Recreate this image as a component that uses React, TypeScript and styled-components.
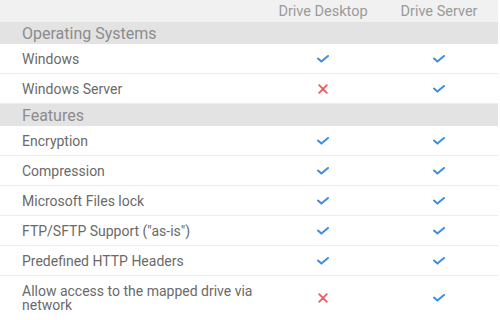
import React from "react";
import styled, { createGlobalStyle } from "styled-components";

const GlobalStyle = createGlobalStyle`
  body {
    margin: 0;
    background: #ffffff;
    font-family: Roboto, "Liberation Sans", sans-serif;
  }
`;

type Support = "yes" | "no";

type TFeature = {
  label: string;
  desktop: Support;
  server: Support;
};

type TSection = {
  title: string;
  rows: TFeature[];
};

const SECTIONS: TSection[] = [
  {
    title: "Operating Systems",
    rows: [
      { label: "Windows", desktop: "yes", server: "yes" },
      { label: "Windows Server", desktop: "no", server: "yes" },
    ],
  },
  {
    title: "Features",
    rows: [
      { label: "Encryption", desktop: "yes", server: "yes" },
      { label: "Compression", desktop: "yes", server: "yes" },
      { label: "Microsoft Files lock", desktop: "yes", server: "yes" },
      { label: "FTP/SFTP Support (\"as-is\")", desktop: "yes", server: "yes" },
      { label: "Predefined HTTP Headers", desktop: "yes", server: "yes" },
      {
        label: "Allow access to the mapped drive via network",
        desktop: "no",
        server: "yes",
      },
    ],
  },
];

const Table = styled.table`
  width: 498px;
  border-collapse: separate;
  border-spacing: 0;
  table-layout: fixed;
`;

const HeadCell = styled.th`
  height: 22px;
  padding: 0;
  background: #f1f1f1;
  font-size: 14.5px;
  font-weight: 400;
  color: #9a9a9a;
  text-align: center;
  vertical-align: middle;
`;

const SectionCell = styled.td`
  height: 22px;
  padding: 0 0 0 22px;
  background: #e3e3e4;
  font-size: 16px;
  color: #8c8c8c;
  vertical-align: middle;
`;

const LabelCell = styled.td<{ $last?: boolean }>`
  height: ${(p) => (p.$last ? "43px" : "29px")};
  padding: 0 12px 0 22px;
  border-bottom: ${(p) => (p.$last ? "none" : "1px solid #ececec")};
  font-size: 14px;
  line-height: 14px;
  color: #6a6a6a;
  vertical-align: middle;
`;

const MarkCell = styled.td<{ $last?: boolean }>`
  padding: 0;
  border-bottom: ${(p) => (p.$last ? "none" : "1px solid #ececec")};
  text-align: center;
  vertical-align: middle;
  line-height: 0;
`;

const Check = () => (
  <svg width="12" height="8" viewBox="0 0 12 8">
    <path
      d="M1 3.6 L4.4 6.6 L11 1"
      fill="none"
      stroke="#3a8fe4"
      strokeWidth="2"
      strokeLinecap="round"
      strokeLinejoin="round"
    />
  </svg>
);

const Cross = () => (
  <svg width="10" height="10" viewBox="0 0 10 10">
    <path
      d="M1.2 1.2 L8.8 8.8 M8.8 1.2 L1.2 8.8"
      fill="none"
      stroke="#ee5d5d"
      strokeWidth="1.8"
      strokeLinecap="round"
    />
  </svg>
);

const Mark = ({ value }: { value: Support }) =>
  value === "yes" ? <Check /> : <Cross />;

const App = () => {
  const lastSection = SECTIONS.length - 1;
  return (
    <>
      <GlobalStyle />
      <Table>
        <colgroup>
          <col style={{ width: 266 }} />
          <col style={{ width: 114 }} />
          <col style={{ width: 118 }} />
        </colgroup>
        <thead>
          <tr>
            <HeadCell />
            <HeadCell>Drive Desktop</HeadCell>
            <HeadCell>Drive Server</HeadCell>
          </tr>
        </thead>
        {SECTIONS.map((section, si) => (
          <tbody key={section.title}>
            <tr>
              <SectionCell colSpan={3}>{section.title}</SectionCell>
            </tr>
            {section.rows.map((row, ri) => {
              const last = si === lastSection && ri === section.rows.length - 1;
              return (
                <tr key={row.label}>
                  <LabelCell $last={last}>{row.label}</LabelCell>
                  <MarkCell $last={last}>
                    <Mark value={row.desktop} />
                  </MarkCell>
                  <MarkCell $last={last}>
                    <Mark value={row.server} />
                  </MarkCell>
                </tr>
              );
            })}
          </tbody>
        ))}
      </Table>
    </>
  );
};

export default App;
